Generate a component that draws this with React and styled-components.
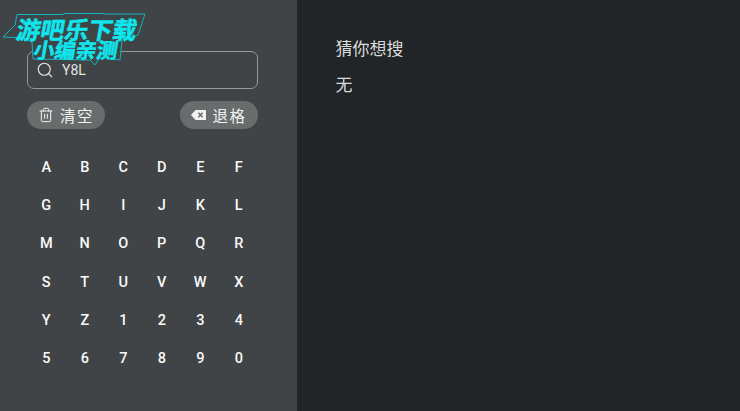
import React from 'react';
import styled, { createGlobalStyle } from 'styled-components';
import { Search, Trash2 } from 'lucide-react';

const GlobalStyle = createGlobalStyle`
  html, body { margin: 0; padding: 0; background: #212528; }
  body { font-family: Roboto, "Noto Sans CJK SC", sans-serif; }
`;

const Screen = styled.div`
  width: 740px;
  height: 411px;
  display: flex;
  overflow: hidden;
  position: relative;
  background: #212528;
`;

const Sidebar = styled.aside`
  width: 297px;
  box-sizing: border-box;
  padding: 51px 39px 0 27px;
  background: #404446;
`;

const SearchBox = styled.div`
  height: 38px;
  box-sizing: border-box;
  border: 1px solid #96999a;
  border-radius: 7px;
  display: flex;
  align-items: center;
  padding-left: 8px;
  gap: 8px;
  color: #e4e5e5;
  font-size: 14px;
`;

const Actions = styled.div`
  display: flex;
  justify-content: space-between;
  margin-top: 12px;
`;

const Pill = styled.button`
  width: 78px;
  height: 28px;
  padding: 0;
  border: 0;
  border-radius: 14px;
  background: #696c6d;
  color: #f2f2f2;
  font: 400 15.5px "Noto Sans CJK SC", sans-serif;
  letter-spacing: 1.5px;
  display: flex;
  align-items: center;
  justify-content: center;
  gap: 6px;
`;

const Keys = styled.div`
  display: grid;
  grid-template-columns: repeat(6, 38.5px);
  grid-auto-rows: 38.35px;
  margin-top: 19px;
`;

const Key = styled.div`
  display: flex;
  align-items: center;
  justify-content: center;
  color: #fafafa;
  font-size: 14.5px;
  font-weight: 500;
`;

const Main = styled.main`
  flex: 1;
  padding: 36px 0 0 38.5px;
  color: #d9dada;
  font: 400 17px/24px "Noto Sans CJK SC", sans-serif;
`;

const Line = styled.div`
  margin-bottom: 11.5px;
`;

const Watermark = styled.div`
  position: absolute;
  left: 2px;
  top: 13px;
  width: 146px;
  height: 54px;
`;

const WatermarkShape = styled.svg`
  position: absolute;
  inset: 0;
`;

const WatermarkText = styled.div`
  position: absolute;
  left: ${(p) => p.$left}px;
  top: ${(p) => p.$top}px;
  height: ${(p) => p.$size - 3}px;
  color: #0fe6ee;
  font: 700 ${(p) => p.$size}px/${(p) => p.$size - 3}px "Noto Sans CJK SC", sans-serif;
  white-space: nowrap;
  transform: skewX(-10deg);
  -webkit-text-stroke: 0.5px #0fe6ee;
`;

const keys = 'ABCDEFGHIJKLMNOPQRSTUVWXYZ1234567890'.split('');

const BackspaceIcon = () => (
  <svg width="15" height="10" viewBox="0 0 15 10">
    <path d="M4.5 0H15V10H4.5L0 5Z" fill="#f2f2f2" />
    <path d="M7.4 2.8L11.6 7.2M11.6 2.8L7.4 7.2" stroke="#696c6d" strokeWidth="1.5" />
  </svg>
);

export default function App() {
  return (
    <Screen>
      <GlobalStyle />
      <Sidebar>
        <SearchBox>
          <Search size={18} strokeWidth={1.5} />
          <span>Y8L</span>
        </SearchBox>
        <Actions>
          <Pill>
            <Trash2 size={16} strokeWidth={1.5} />
            清空
          </Pill>
          <Pill>
            <BackspaceIcon />
            退格
          </Pill>
        </Actions>
        <Keys>
          {keys.map((k) => (
            <Key key={k}>{k}</Key>
          ))}
        </Keys>
      </Sidebar>
      <Main>
        <Line>猜你想搜</Line>
        <Line>无</Line>
      </Main>
      <Watermark>
        <WatermarkShape width="146" height="54" viewBox="0 0 146 54">
          <path
            d="M15 1.5H60L63 0.5H100L103 1H143L136 22L120 27L118 47L98 44L93 52L88 47L31 46L30 29L23 25L1 24L13 12Z"
            fill="#3d4547"
            stroke="#14b4c4"
            strokeWidth="1"
          />
        </WatermarkShape>
        <WatermarkText $left={15} $top={5} $size={24}>游吧乐下载</WatermarkText>
        <WatermarkText $left={32} $top={27} $size={21}>小编亲测</WatermarkText>
      </Watermark>
    </Screen>
  );
}
